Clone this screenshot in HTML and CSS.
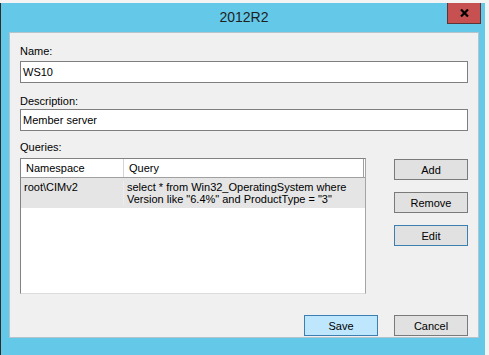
FILE: index.html
```html
<!DOCTYPE html>
<html lang="en">
<head>
  <meta charset="UTF-8">
  <title>2012R2</title>
  <meta name="viewport" content="width=device-width, initial-scale=1">
  <link rel="stylesheet" href="styles.css">
</head>
<body>
  <div class="window">
    <div class="titlebar">
      <div></div>
      <div class="title">2012R2</div>
      <div class="close">
        <svg width="9" height="8" viewBox="0 0 9 8"><path d="M1 0.5 L8 7.5 M8 0.5 L1 7.5" stroke="#000" stroke-width="2.2"/></svg>
      </div>
    </div>
    <div class="panel">
      <div class="label">Name:</div>
      <div class="field name-field">WS10</div>
      <div class="label desc-label">Description:</div>
      <div class="field desc-field">Member server</div>
      <div class="label queries-label">Queries:</div>
      <div class="queries">
        <div class="list">
          <div class="list-row list-head">
            <div class="cell">Namespace</div>
            <div class="cell">Query</div>
          </div>
          <div class="list-row list-item">
            <div class="cell">root\CIMv2</div>
            <div class="cell">select * from Win32_OperatingSystem where Version like "6.4%" and ProductType = "3"</div>
          </div>
        </div>
        <div class="side">
          <button class="button">Add</button>
          <button class="button">Remove</button>
          <button class="button focus">Edit</button>
        </div>
      </div>
      <div class="footer">
        <button class="button default">Save</button>
        <button class="button">Cancel</button>
      </div>
    </div>
  </div>
</body>
</html>
```

FILE: styles.css
```css
body { background:#f4f4f4; font-family:"Liberation Sans", Arial, sans-serif; font-size:11px; margin:0; padding:0; overflow:hidden; color:#000; }
.window { margin-top:3px; width:484px; height:352px; background:#64c8e9; border-left:1px solid #2d2d2d; }
.titlebar { display:grid; grid-template-columns:1fr auto 1fr; height:29px; }
.title { font-size:14px; color:#1e1e1e; line-height:29px; padding-left:2px; }
.close { justify-self:end; margin-right:4px; width:32px; height:20px; background:#c75050; border:1px solid #5e3434; border-top:none; display:flex; align-items:center; justify-content:center; }
.panel { margin-left:8px; width:470px; height:306px; box-sizing:border-box; background:#f0f0f0; border:1px solid #b3c4cc; padding:12px 10px 0 10px; }
.label { line-height:13px; }
.field { margin-top:3px; height:20px; line-height:20px; border:1px solid #7f7f7f; background:#fff; padding-left:2px; }
.desc-label { margin-top:12px; }
.desc-field { margin-top:1px; }
.queries-label { margin-top:10px; }
.queries { display:flex; justify-content:space-between; margin-top:4px; }
.list { width:346px; height:136px; box-sizing:border-box; background:#fff; border:1px solid; border-color:#828282 #a5a5a5 #dcdcdc #828282; }
.list-row { display:grid; grid-template-columns:103px 240px; }
.list-head { height:18px; line-height:18px; border-bottom:1px solid #a0a0a0; }
.list-head .cell { padding-left:5px; border-right:1px solid #d5d5d5; }
.list-head .cell:last-child { border-right:1px solid #a0a0a0; }
.list-item { background:#e5e5e5; padding:3px 0; }
.list-item .cell { padding-left:3px; line-height:12px; }
.list-item .cell:first-child { border-right:1px solid #ededed; }
.side { display:flex; flex-direction:column; gap:12px; padding-top:1px; }
.button { width:74px; height:21px; background:#e1e1e1; border:1px solid #7a7a7a; font-family:inherit; font-size:11px; color:#000; padding:0; }
.button.focus { border-color:#3c7fb1; }
.button.default { background:#bee6fd; border-color:#3c7fb1; }
.footer { display:flex; justify-content:flex-end; gap:16px; margin-top:21px; }
```
